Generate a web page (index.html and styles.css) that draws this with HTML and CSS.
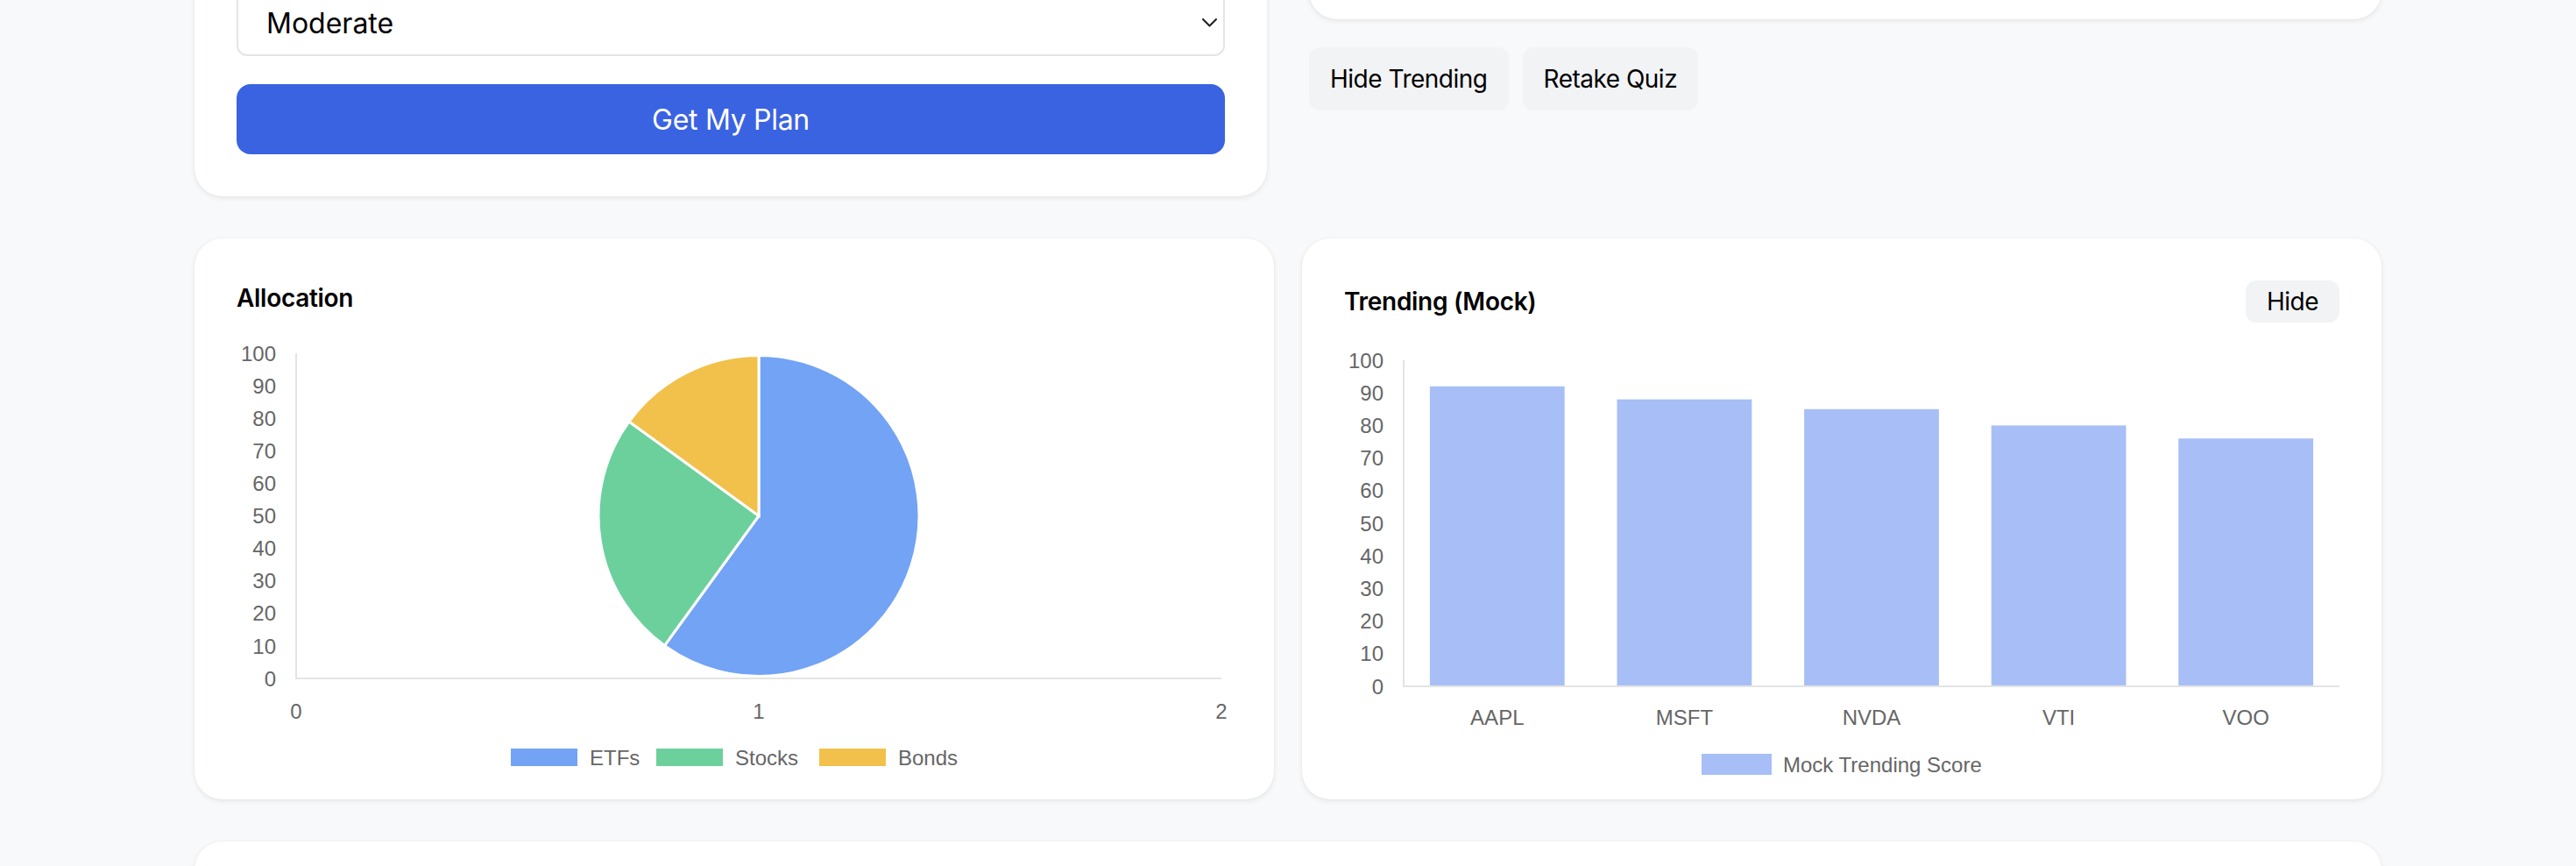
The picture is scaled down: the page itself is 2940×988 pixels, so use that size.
FILE: index.html
```html
<!DOCTYPE html>
<html lang="en">
<head>
<meta charset="utf-8">
<title>Plan</title>
<link rel="stylesheet" href="styles.css">
</head>
<body>
<main class="page">
  <section class="row row-top">
    <div class="card quiz-card">
      <div class="select-wrap">
        <select id="risk" class="select" aria-label="Risk tolerance">
          <option>Conservative</option>
          <option selected>Moderate</option>
          <option>Aggressive</option>
        </select>
        <svg class="chevron" viewBox="0 0 17 10" width="17" height="10" aria-hidden="true"><path d="M1 1 L8.5 8.5 L16 1" fill="none" stroke="#1f1f1f" stroke-width="2" stroke-linecap="round" stroke-linejoin="round"/></svg>
      </div>
      <button class="primary-btn" type="button">Get My Plan</button>
    </div>
    <div class="side">
      <div class="card plan-card"></div>
      <div class="actions">
        <button class="soft-btn" type="button">Hide Trending</button>
        <button class="soft-btn" type="button">Retake Quiz</button>
      </div>
    </div>
  </section>

  <section class="row row-charts">
    <div class="card chart-card">
      <h3 class="card-title title-gap">Allocation</h3>
      <svg class="chart" viewBox="0 0 1136 512" width="1136" height="512">
        <g class="chart-text ylab">
          <text x="45" y="35.6">100</text>
          <text x="45" y="72.7">90</text>
          <text x="45" y="109.8">80</text>
          <text x="45" y="146.9">70</text>
          <text x="45" y="184.0">60</text>
          <text x="45" y="221.1">50</text>
          <text x="45" y="258.2">40</text>
          <text x="45" y="295.3">30</text>
          <text x="45" y="332.4">20</text>
          <text x="45" y="369.5">10</text>
          <text x="45" y="406.6">0</text>
        </g>
        <g class="chart-text xlab">
          <text x="68" y="443.6">0</text>
          <text x="596" y="443.6">1</text>
          <text x="1124" y="443.6">2</text>
        </g>
        <line class="axis" x1="68" y1="27" x2="68" y2="399"/>
        <line class="axis" x1="67" y1="398" x2="1124" y2="398"/>
        <g class="pie">
          <path class="c-etf" d="M596,212.5 L596,29.5 A183,183 0 1 1 488.44,360.55 Z"/>
          <path class="c-stock" d="M596,212.5 L488.44,360.55 A183,183 0 0 1 447.95,104.94 Z"/>
          <path class="c-bond" d="M596,212.5 L447.95,104.94 A183,183 0 0 1 596,29.5 Z"/>
        </g>
        <g class="legend">
          <rect class="c-etf" x="313" y="478" width="76" height="20"/>
          <text class="chart-text" x="403" y="496.6">ETFs</text>
          <rect class="c-stock" x="479" y="478" width="76" height="20"/>
          <text class="chart-text" x="569" y="496.6">Stocks</text>
          <rect class="c-bond" x="665" y="478" width="76" height="20"/>
          <text class="chart-text" x="755" y="496.6">Bonds</text>
        </g>
      </svg>
    </div>

    <div class="card chart-card">
      <div class="card-head">
        <h3 class="card-title">Trending (Mock)</h3>
        <button class="small-btn" type="button">Hide</button>
      </div>
      <svg class="chart" viewBox="0 0 1136 512" width="1136" height="512">
        <g class="chart-text ylab">
          <text x="45" y="35.6">100</text>
          <text x="45" y="72.8">90</text>
          <text x="45" y="110.0">80</text>
          <text x="45" y="147.2">70</text>
          <text x="45" y="184.4">60</text>
          <text x="45" y="221.6">50</text>
          <text x="45" y="258.8">40</text>
          <text x="45" y="296.0">30</text>
          <text x="45" y="333.2">20</text>
          <text x="45" y="370.4">10</text>
          <text x="45" y="407.6">0</text>
        </g>
        <g class="bars">
          <rect x="97.9" y="56.76" width="153.8" height="342.24"/>
          <rect x="311.5" y="71.64" width="153.8" height="327.36"/>
          <rect x="525.1" y="82.8" width="153.8" height="316.2"/>
          <rect x="738.7" y="101.4" width="153.8" height="297.6"/>
          <rect x="952.3" y="116.28" width="153.8" height="282.72"/>
        </g>
        <line class="axis" x1="68" y1="27" x2="68" y2="400"/>
        <line class="axis" x1="67" y1="399" x2="1136" y2="399"/>
        <g class="chart-text xlab">
          <text x="174.8" y="442.6">AAPL</text>
          <text x="388.4" y="442.6">MSFT</text>
          <text x="602" y="442.6">NVDA</text>
          <text x="815.6" y="442.6">VTI</text>
          <text x="1029.2" y="442.6">VOO</text>
        </g>
        <g class="legend">
          <rect class="bar-fill" x="408" y="476" width="80" height="24"/>
          <text class="chart-text" x="501" y="496.6">Mock Trending Score</text>
        </g>
      </svg>
    </div>
  </section>

  <section class="row row-bottom">
    <div class="card bottom-card"></div>
  </section>
</main>
</body>
</html>
```

FILE: styles.css
```css
html, body {
  margin: 0;
  padding: 0;
}
body {
  background: #f8f9fb;
  font-family: Inter, "Noto Sans", "Liberation Sans", sans-serif;
  color: #000;
}
.page {
  width: 2496px;
  margin: -60px auto 0;
}
.row {
  display: grid;
  grid-template-columns: 1fr 1fr;
}
.row-top {
  gap: 48px;
  align-items: start;
}
.row-charts {
  gap: 32px;
  margin-top: 48px;
}
.row-bottom {
  grid-template-columns: 1fr;
  margin-top: 48px;
}
.card {
  background: #fff;
  border-radius: 32px;
  box-shadow: 0 2px 6px rgba(0, 0, 0, 0.08), 0 0 2px rgba(0, 0, 0, 0.05);
}
.quiz-card {
  padding: 48px;
}
.select-wrap {
  position: relative;
}
.select {
  display: block;
  width: 100%;
  height: 76px;
  box-sizing: border-box;
  -webkit-appearance: none;
  appearance: none;
  border: 2px solid #e4e5e9;
  border-radius: 12px;
  background: #fff;
  padding: 0 32px;
  font-family: Inter, "Noto Sans", sans-serif;
  font-size: 32px;
  color: #000;
}
.chevron {
  position: absolute;
  right: 9px;
  top: 33px;
}
.primary-btn {
  display: block;
  width: 100%;
  height: 80px;
  margin-top: 32px;
  border: none;
  border-radius: 16px;
  background: #3a63e2;
  color: #fff;
  font-family: Inter, "Noto Sans", sans-serif;
  font-size: 32px;
  font-weight: 400;
  letter-spacing: -0.3px;
}
.side {
  display: flex;
  flex-direction: column;
}
.plan-card {
  height: 82px;
}
.actions {
  display: flex;
  gap: 16px;
  margin-top: 32px;
}
.soft-btn {
  height: 72px;
  padding: 0 24px;
  border: none;
  border-radius: 12px;
  background: #f2f3f5;
  color: #000;
  font-family: Inter, "Noto Sans", sans-serif;
  font-size: 28px;
  letter-spacing: -0.5px;
}
.chart-card {
  padding: 48px 48px 16px;
}
.card-title {
  margin: 0;
  font-size: 28px;
  line-height: 40px;
  font-weight: 600;
  letter-spacing: -0.3px;
}
.title-gap {
  margin-bottom: 16px;
}
.card-head {
  display: flex;
  align-items: center;
  justify-content: space-between;
  height: 48px;
  margin-bottom: 16px;
}
.small-btn {
  height: 48px;
  padding: 0 24px;
  border: none;
  border-radius: 12px;
  background: #f2f3f5;
  color: #000;
  font-family: Inter, "Noto Sans", sans-serif;
  font-size: 28px;
  letter-spacing: -0.5px;
}
.chart {
  display: block;
  width: 1136px;
  height: 512px;
}
.chart-text {
  font-family: "Liberation Sans", Arial, sans-serif;
  font-size: 24px;
  fill: #666;
}
.ylab text {
  text-anchor: end;
}
.xlab text {
  text-anchor: middle;
}
.axis {
  stroke: #e4e4e4;
  stroke-width: 2;
}
.pie path {
  stroke: #fff;
  stroke-width: 3;
}
.c-etf { fill: #72a3f5; }
.c-stock { fill: #6cd09d; }
.c-bond { fill: #f2c14b; }
.bars rect,
.bar-fill {
  fill: #a7bff6;
}
.bottom-card {
  height: 400px;
}
```
